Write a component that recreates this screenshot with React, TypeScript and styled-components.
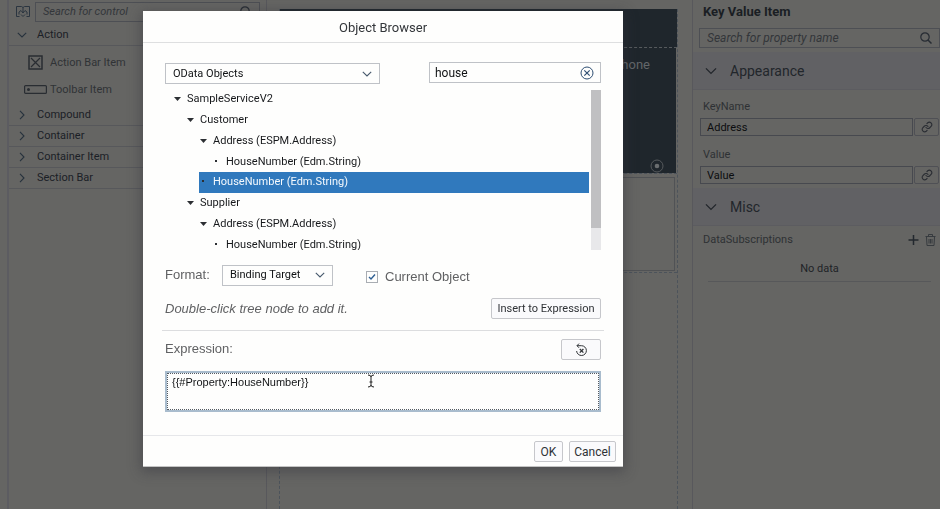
import React, { useState } from "react";
import styled, { createGlobalStyle, css } from "styled-components";

const GlobalStyle = createGlobalStyle`
  *, *::before, *::after { box-sizing: border-box; }
  html, body, #root { height: 100%; }
  body {
    margin: 0;
    overflow: hidden;
    background: #656563;
    font-family: Roboto, "Liberation Sans", sans-serif;
    font-size: 11px;
    line-height: 16px;
    color: #1c2228;
  }
  input, select, textarea, button { font: inherit; color: inherit; margin: 0; }
`;

/* ---------- workspace ---------- */

const Workspace = styled.div`
  display: grid;
  grid-template-columns: 7px 260px minmax(0, 1fr) 248px;
  height: 100vh;
`;

const Rail = styled.div`
  background: #656563;
`;

const Palette = styled.aside`
  border-left: 2px solid #5c5c61;
  border-right: 1px solid #58585c;
  background: #656563;
`;

const PaletteTop = styled.div`
  display: flex;
  align-items: center;
  gap: 5px;
  height: 25px;
  padding: 0 6px 2px 7px;
  color: #2b3540;
`;

const SearchBox = styled.label`
  display: flex;
  flex: 1;
  align-items: center;
  height: 20px;
  padding: 0 7px;
  border: 1px solid #4d4f54;
  color: #272c33;
`;

const SearchInput = styled.input`
  flex: 1;
  min-width: 0;
  padding: 0;
  border: 0;
  outline: 0;
  background: transparent;
  &::placeholder {
    color: #33363a;
    font-style: italic;
    opacity: 1;
  }
`;

const GroupButton = styled.button`
  display: flex;
  align-items: center;
  gap: 10px;
  width: 100%;
  height: 21px;
  padding: 0 8px;
  border: 0;
  border-bottom: 1px solid #57585b;
  background: transparent;
  color: #1b2026;
  text-align: left;
  svg { color: #27323d; }
`;

const GroupItems = styled.ul`
  margin: 0;
  padding: 3px 0 2px;
  list-style: none;
`;

const GroupItem = styled.li`
  display: grid;
  grid-template-columns: 28px 1fr;
  align-items: center;
  column-gap: 1px;
  height: 27px;
  padding-left: 12px;
  color: #303336;
  svg { justify-self: center; }
`;

const Canvas = styled.main`
  display: flex;
  padding: 9px 14px 0 12px;
  background: #656563;
`;

const Device = styled.div`
  display: flex;
  flex: 1;
  flex-direction: column;
  border-left: 1px dashed #4c535b;
  border-right: 1px dashed #4c535b;
`;

const DeviceBar = styled.div`
  height: 39px;
  background: #1f262c;
  border-bottom: 1px dashed #565a5d;
`;

const DeviceHeader = styled.div`
  display: flex;
  flex-direction: column;
  align-items: flex-end;
  justify-content: space-between;
  height: 125px;
  margin-right: 1px;
  padding: 9px 12px 0 0;
  background: #1f262c;
  color: #63676a;
`;

const HeaderLabel = styled.span`
  padding-right: 14px;
  font-size: 13px;
`;

const DeviceSection = styled.div`
  height: 100px;
  padding: 3px 2px 1px 0;
  border-top: 1px dashed #4c535b;
  border-bottom: 1px dashed #4c535b;
  &::after {
    content: "";
    display: block;
    height: 100%;
    border: 1px solid #505255;
  }
`;

/* ---------- properties ---------- */

const Properties = styled.aside`
  display: flex;
  flex-direction: column;
  border-left: 1px solid #58585c;
  background: #656563;
  overflow: hidden;
`;

const PropertiesTitle = styled.h2`
  margin: 0;
  padding: 4px 10px 8px;
  font-size: 13px;
  line-height: 16px;
  font-weight: 700;
  color: #1a1e23;
`;

const PropertySearch = styled(SearchBox)`
  flex: none;
  margin: 0 0 4px 6px;
  font-size: 12px;
`;

const PanelButton = styled.button`
  display: flex;
  flex: none;
  align-items: center;
  gap: 13px;
  height: 38px;
  padding: 0 12px;
  border: 0;
  border-bottom: 1px solid #5c5c60;
  background: #616164;
  color: #22262b;
  font-size: 14px;
`;

const Field = styled.div`
  display: grid;
  grid-template-columns: 1fr 25px;
  column-gap: 1px;
  padding: 9px 1px 4px 7px;
  & + & { padding-top: 7px; }
`;

const FieldLabel = styled.label`
  grid-column: 1 / -1;
  padding: 0 3px 3px;
  color: #2e3134;
`;

const FieldInput = styled.input`
  min-width: 0;
  height: 18px;
  padding: 0 6px;
  border: 1px solid #47494f;
  border-radius: 0;
  background: transparent;
  color: #0c0d0f;
`;

const LinkButton = styled.button`
  display: flex;
  align-items: center;
  justify-content: center;
  height: 18px;
  padding: 0;
  border: 1px solid #4f5055;
  border-radius: 2px;
  background: transparent;
  color: #2a2d33;
`;

const ListHeader = styled.div`
  display: flex;
  align-items: center;
  gap: 6px;
  padding: 6px 4px 0 10px;
  color: #2e3134;
`;

const ListTitle = styled.span`
  flex: 1;
`;

const IconButton = styled.button`
  display: flex;
  padding: 0;
  border: 0;
  background: transparent;
  color: #23282e;
`;

const Empty = styled.div`
  margin: 13px 9px 0 15px;
  padding-bottom: 4px;
  border-bottom: 1px solid #57585a;
  color: #1f2327;
  text-align: center;
`;

/* ---------- dialog ---------- */

const Overlay = styled.div`
  position: fixed;
  inset: 0;
  display: grid;
  grid-template-columns: 143fr 480fr 317fr;
  align-items: start;
  padding-top: 11px;
`;

const Dialog = styled.section`
  grid-column: 2;
  background: #fefefd;
  border-bottom: 1px solid #c4c4c4;
  box-shadow: 0 3px 12px 2px rgba(50, 50, 60, 0.45);
  color: #1d1f22;
`;

const DialogTitle = styled.h1`
  margin: 0;
  padding: 9px 0 6px;
  border-bottom: 1px solid #dedfe0;
  font-size: 13px;
  line-height: 16px;
  font-weight: 400;
  text-align: center;
  color: #33363a;
`;

const Body = styled.div`
  padding: 19px 22px 23px;
`;

const Filters = styled.div`
  display: grid;
  grid-template-columns: minmax(0, 215fr) minmax(0, 172fr);
  column-gap: 49px;
`;

const SelectWrap = styled.div`
  display: grid;
  align-items: center;
  margin-top: 1px;
  > * { grid-area: 1 / 1; }
  > svg {
    justify-self: end;
    margin-right: 8px;
    color: #46586c;
    pointer-events: none;
  }
`;

const Select = styled.select`
  width: 100%;
  height: 21px;
  padding: 0 24px 0 7px;
  appearance: none;
  border: 1px solid #bfc2c7;
  border-radius: 0;
  background: transparent;
  color: #101214;
`;

const FilterBox = styled.div`
  display: flex;
  align-items: center;
  height: 21px;
  padding: 0 6px 0 5px;
  border: 1px solid #bfc2c7;
  color: #101214;
`;

const FilterInput = styled(SearchInput)`
  font-size: 12px;
`;

const TreeArea = styled.div`
  display: grid;
  grid-template-columns: minmax(0, 1fr) 10px;
  grid-template-rows: 100%;
  column-gap: 2px;
  height: 161px;
  margin-top: 5px;
  overflow: hidden;
`;

const Tree = styled.ul`
  display: flex;
  flex-direction: column;
  height: 166px;
  margin: 0;
  padding: 0;
  list-style: none;
`;

const TreeRow = styled.li<{ $level: number; $selected?: boolean }>`
  display: flex;
  flex: 1;
  align-items: center;
  gap: 5px;
  margin-left: ${(p) => 8 + p.$level * 13}px;
  color: #17191c;
  svg { color: #2c2f33; }
  ${(p) =>
    p.$selected &&
    css`
      background: #3079bd;
      color: #f4f9fd;
    `}
`;

const ScrollTrack = styled.div`
  margin-top: 1px;
  background: #e8e8ea;
`;

const ScrollThumb = styled.div`
  height: 86%;
  background: #c0c0c2;
`;

const PlainText = styled.span<{ $italic?: boolean }>`
  font-family: "Liberation Sans", Arial, sans-serif;
  font-size: 13px;
  color: #606163;
  font-style: ${(p) => (p.$italic ? "italic" : "normal")};
`;

const FormatRow = styled.div`
  display: flex;
  align-items: center;
  height: 22px;
  margin-top: 14px;
`;

const FormatLabel = styled.label`
  width: 57px;
`;

const FormatSelect = styled(SelectWrap)`
  width: 111px;
  margin: 0 33px 0 0;
`;

const CheckLabel = styled.label`
  display: flex;
  align-items: center;
  gap: 7px;
  padding-top: 3px;
`;

const CheckBox = styled.input`
  width: 12px;
  height: 12px;
  appearance: none;
  border: 1px solid #a9adb3;
  background: #fefefd;
`;

const CheckWrap = styled.span`
  display: grid;
  place-items: center;
  > * { grid-area: 1 / 1; }
  > svg { pointer-events: none; color: #2f5f93; }
`;

const ActionRow = styled.div`
  display: flex;
  align-items: center;
  justify-content: space-between;
  margin-top: 12px;
`;

const Button = styled.button<{ $width?: number }>`
  display: flex;
  align-items: center;
  justify-content: center;
  height: 21px;
  width: ${(p) => (p.$width ? `${p.$width}px` : "auto")};
  padding: 0 5px;
  border: 1px solid #c6c7cb;
  border-radius: 2px;
  background: #fafafc;
  color: #2f3236;
  white-space: nowrap;
`;

const Divider = styled.hr`
  margin: 11px -3px 0;
  border: 0;
  border-top: 1px solid #dcdddf;
`;

const ExpressionRow = styled(ActionRow)`
  margin-top: 8px;
`;

const Expression = styled.textarea`
  display: block;
  width: 100%;
  height: 41px;
  margin-top: 11px;
  padding: 2px 5px;
  border: 2px solid #a9bccd;
  border-radius: 0;
  outline: 1px dotted #555b62;
  outline-offset: -3px;
  background: transparent;
  resize: none;
  font-family: "Liberation Sans", Arial, sans-serif;
  line-height: 14px;
  color: #121416;
`;

const Footer = styled.footer`
  display: flex;
  justify-content: flex-end;
  gap: 6px;
  padding: 5px 7px 4px;
  border-top: 1px solid #e6e7ea;
  font-size: 12px;
`;

const Pointer = styled.svg`
  position: absolute;
  top: 3px;
  left: 202px;
  color: #222;
  pointer-events: none;
`;

const ExpressionWrap = styled.div`
  position: relative;
`;

/* ---------- icons ---------- */

const Chevron = ({ dir = "down", size = 10 }: { dir?: "down" | "right"; size?: number }) => (
  <svg width={size} height={size} viewBox="0 0 10 10" fill="none" stroke="currentColor" strokeWidth="1.1">
    <path d={dir === "down" ? "M.8 2.8 5 7l4.200-4.200" : "M3 .8 7 5 3 9.200"} />
  </svg>
);

const SearchIcon = () => (
  <svg width="12" height="12" viewBox="0 0 12 12" fill="none" stroke="currentColor" strokeWidth="1.200">
    <circle cx="5" cy="5" r="4.200" />
    <path d="m8 8 3.500 3.500" strokeWidth="1.500" />
  </svg>
);

const PaletteIcon = () => (
  <svg width="14" height="13" viewBox="0 0 14 13" fill="none" stroke="currentColor">
    <path d="M3.500 11.500h-3V1.500h5L7 2.500l1.500-1h5v10h-3M7 2.500V8M3 9.500V7l2-1.500L7 8l2-2.500L11 7v2.500M5 9.500l2 2 2-2" />
  </svg>
);

const CrossBoxIcon = () => (
  <svg width="15" height="15" viewBox="0 0 15 15" fill="none" stroke="#292d32">
    <rect x="1" y="1" width="13" height="13" strokeWidth="1.500" />
    <path d="m3 3 9 9m0-9-9 9" strokeWidth="1.200" />
  </svg>
);

const ToolbarIcon = () => (
  <svg width="23" height="9" viewBox="0 0 23 9" fill="none" stroke="#292d32">
    <rect x=".6" y=".6" width="21.800" height="7.800" rx="1" strokeWidth="1.200" />
    <circle cx="4.500" cy="4.500" r="1.500" fill="#292d32" stroke="none" />
  </svg>
);

const TargetIcon = () => (
  <svg width="14" height="14" viewBox="0 0 14 14" fill="none" stroke="#55595c">
    <circle cx="7" cy="7" r="6" />
    <circle cx="7" cy="7" r="2.300" fill="#6a6d6f" stroke="none" />
  </svg>
);

const ClearIcon = () => (
  <svg width="14" height="14" viewBox="0 0 14 14" fill="none" stroke="#2f4f73">
    <circle cx="7" cy="7" r="6" />
    <path d="m4.300 4.300 5.400 5.400m0-5.400L4.300 9.700" strokeWidth="1.200" />
  </svg>
);

const LinkIcon = () => (
  <svg width="12" height="12" viewBox="0 0 24 24" fill="none" stroke="currentColor" strokeWidth="2.200" strokeLinecap="round">
    <path d="M10 13a5 5 0 0 0 7.500.5l3-3a5 5 0 0 0-7-7L11.800 5.200" />
    <path d="M14 11a5 5 0 0 0-7.500-.5l-3 3a5 5 0 0 0 7 7l1.700-1.700" />
  </svg>
);

const PlusIcon = () => (
  <svg width="11" height="12" viewBox="0 0 11 12" stroke="currentColor" strokeWidth="1.500">
    <path d="M5.500 1v10M.5 6h10" />
  </svg>
);

const TrashIcon = () => (
  <svg width="11" height="12" viewBox="0 0 11 12" fill="none" stroke="#373b3f">
    <path d="M.5 2.500h10M3.500 2.500v-2h4v2M1.500 3l.5 8.500h7L9.500 3M4 5v4.500M5.500 5v4.500M7 5v4.500" />
  </svg>
);

const ResetIcon = () => (
  <svg width="13" height="14" viewBox="0 0 13 14" fill="none" stroke="#2f3236">
    <path d="M2 2.700h4.500a4.900 4.900 0 1 1-4.900 5.300M4 .6 2 2.700l2 2.100" />
    <path d="m4.800 6 3.600 3.600m0-3.600L4.800 9.600" strokeWidth="1.300" />
  </svg>
);

const NodeMarker = ({ leaf }: { leaf?: boolean }) => (
  <svg width="9" height="10" viewBox="0 0 9 10" fill="currentColor">
    {leaf ? <rect x="3" y="3" width="2" height="2" /> : <path d="M1 3h7L4.500 7z" />}
  </svg>
);

/* ---------- data ---------- */

const nodes = [
  { text: "SampleServiceV2", level: 0 },
  { text: "Customer", level: 1 },
  { text: "Address (ESPM.Address)", level: 2 },
  { text: "HouseNumber (Edm.String)", level: 3, leaf: true },
  { text: "HouseNumber (Edm.String)", level: 2, leaf: true },
  { text: "Supplier", level: 1 },
  { text: "Address (ESPM.Address)", level: 2 },
  { text: "HouseNumber (Edm.String)", level: 3, leaf: true },
];

const groups = ["Compound", "Container", "Container Item", "Section Bar"];

const fields = [
  { id: "key-name", label: "KeyName", value: "Address" },
  { id: "value", label: "Value", value: "Value" },
];

export default function App() {
  const [selected, setSelected] = useState(4);

  return (
    <>
      <GlobalStyle />
      <Workspace>
        <Rail />
        <Palette>
          <PaletteTop>
            <PaletteIcon />
            <SearchBox>
              <SearchInput placeholder="Search for control" aria-label="Search for control" />
              <SearchIcon />
            </SearchBox>
          </PaletteTop>
          <GroupButton>
            <Chevron />
            Action
          </GroupButton>
          <GroupItems>
            <GroupItem>
              <CrossBoxIcon />
              Action Bar Item
            </GroupItem>
            <GroupItem>
              <ToolbarIcon />
              Toolbar Item
            </GroupItem>
          </GroupItems>
          {groups.map((name) => (
            <GroupButton key={name}>
              <Chevron dir="right" />
              {name}
            </GroupButton>
          ))}
        </Palette>
        <Canvas>
          <Device>
            <DeviceBar />
            <DeviceHeader>
              <HeaderLabel>Phone</HeaderLabel>
              <TargetIcon />
            </DeviceHeader>
            <DeviceSection />
          </Device>
        </Canvas>
        <Properties>
          <PropertiesTitle>Key Value Item</PropertiesTitle>
          <PropertySearch>
            <SearchInput placeholder="Search for property name" aria-label="Search for property name" />
            <SearchIcon />
          </PropertySearch>
          <PanelButton>
            <Chevron size={12} />
            Appearance
          </PanelButton>
          {fields.map((f) => (
            <Field key={f.id}>
              <FieldLabel htmlFor={f.id}>{f.label}</FieldLabel>
              <FieldInput id={f.id} defaultValue={f.value} />
              <LinkButton aria-label={`Bind ${f.label}`}>
                <LinkIcon />
              </LinkButton>
            </Field>
          ))}
          <PanelButton>
            <Chevron size={12} />
            Misc
          </PanelButton>
          <ListHeader>
            <ListTitle>DataSubscriptions</ListTitle>
            <IconButton aria-label="Add">
              <PlusIcon />
            </IconButton>
            <IconButton aria-label="Delete">
              <TrashIcon />
            </IconButton>
          </ListHeader>
          <Empty>No data</Empty>
        </Properties>
      </Workspace>

      <Overlay>
        <Dialog role="dialog" aria-labelledby="dialog-title">
          <DialogTitle id="dialog-title">Object Browser</DialogTitle>
          <Body>
            <Filters>
              <SelectWrap>
                <Select aria-label="Object type">
                  <option>OData Objects</option>
                </Select>
                <Chevron />
              </SelectWrap>
              <FilterBox>
                <FilterInput defaultValue="house" aria-label="Filter objects" />
                <IconButton aria-label="Clear filter">
                  <ClearIcon />
                </IconButton>
              </FilterBox>
            </Filters>
            <TreeArea>
              <Tree role="tree">
                {nodes.map((n, i) => (
                  <TreeRow
                    key={i}
                    role="treeitem"
                    aria-selected={i === selected}
                    $level={n.level}
                    $selected={i === selected}
                    onClick={() => setSelected(i)}
                  >
                    <NodeMarker leaf={n.leaf} />
                    {n.text}
                  </TreeRow>
                ))}
              </Tree>
              <ScrollTrack>
                <ScrollThumb />
              </ScrollTrack>
            </TreeArea>
            <FormatRow>
              <FormatLabel htmlFor="format">
                <PlainText>Format:</PlainText>
              </FormatLabel>
              <FormatSelect>
                <Select id="format">
                  <option>Binding Target</option>
                </Select>
                <Chevron />
              </FormatSelect>
              <CheckLabel>
                <CheckWrap>
                  <CheckBox type="checkbox" defaultChecked />
                  <svg width="8" height="8" viewBox="0 0 8 8" fill="none" stroke="currentColor" strokeWidth="1.400">
                    <path d="m1 4 2 2 4-4.500" />
                  </svg>
                </CheckWrap>
                <PlainText>Current Object</PlainText>
              </CheckLabel>
            </FormatRow>
            <ActionRow>
              <PlainText $italic>Double-click tree node to add it.</PlainText>
              <Button $width={110}>Insert to Expression</Button>
            </ActionRow>
            <Divider />
            <ExpressionRow>
              <label htmlFor="expression">
                <PlainText>Expression:</PlainText>
              </label>
              <Button $width={40} aria-label="Reset expression">
                <ResetIcon />
              </Button>
            </ExpressionRow>
            <ExpressionWrap>
              <Expression id="expression" defaultValue="{{#Property:HouseNumber}}" spellCheck={false} />
              <Pointer width="8" height="14" viewBox="0 0 8 14" fill="none" stroke="currentColor">
                <path d="M1 1q3 0 3 2 0-2 3-2M4 3v8M1 13q3 0 3-2 0 2 3 2M2.500 8h3" />
              </Pointer>
            </ExpressionWrap>
          </Body>
          <Footer>
            <Button $width={29}>OK</Button>
            <Button $width={47}>Cancel</Button>
          </Footer>
        </Dialog>
      </Overlay>
    </>
  );
}
